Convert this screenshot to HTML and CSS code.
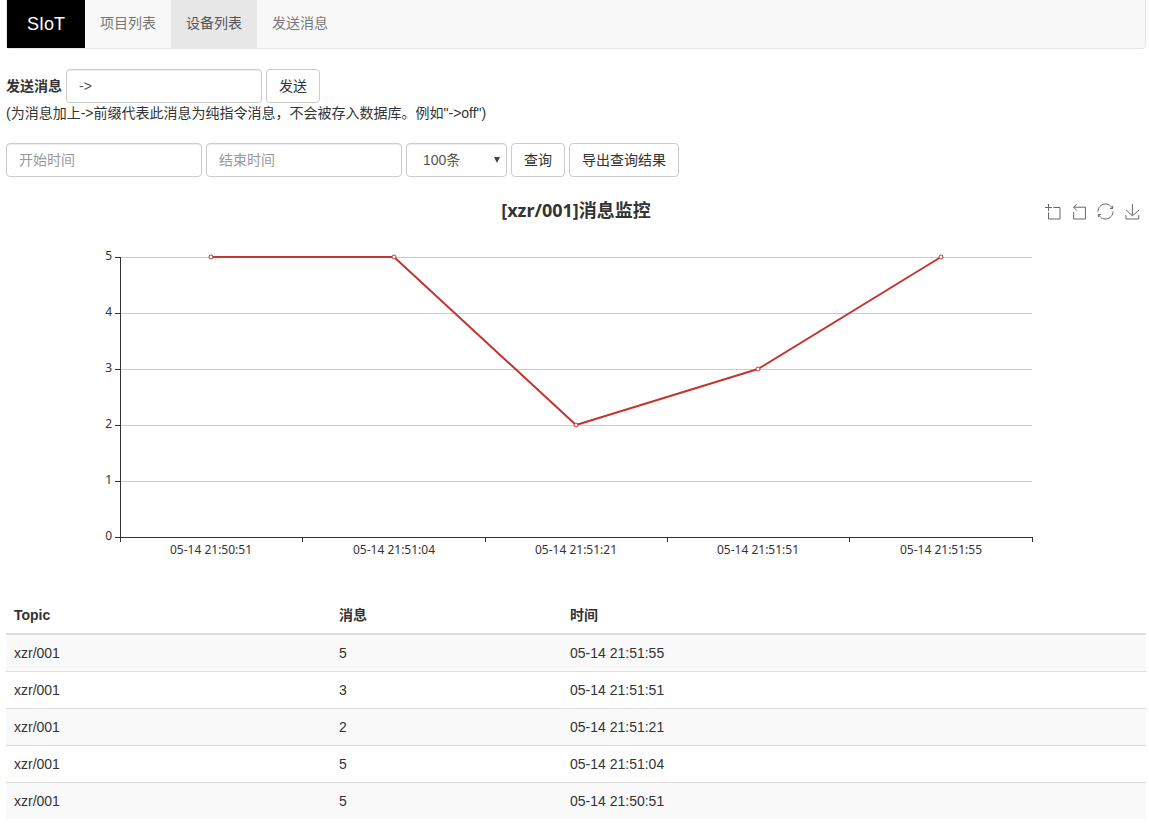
FILE: index.html
```html
<!DOCTYPE html>
<html lang="zh-CN">
<head>
<meta charset="utf-8">
<title>SIoT</title>
<link rel="stylesheet" href="styles.css">
</head>
<body>
<nav class="navbar">
  <a class="brand" href="#">SIoT</a>
  <a class="nav-link" href="#">项目列表</a>
  <a class="nav-link active" href="#">设备列表</a>
  <a class="nav-link" href="#">发送消息</a>
</nav>

<main>
  <form class="send-form">
    <div class="form-row">
      <label class="form-label" for="message">发送消息</label>
      <input class="control" id="message" type="text" value="-&gt;">
      <button class="btn" type="button">发送</button>
    </div>
    <p class="hint">(为消息加上-&gt;前缀代表此消息为纯指令消息，不会被存入数据库。例如"-&gt;off")</p>
  </form>

  <form class="form-row">
    <input class="control" type="text" placeholder="开始时间" aria-label="开始时间">
    <input class="control" type="text" placeholder="结束时间" aria-label="结束时间">
    <div class="select-wrap">
      <select class="control select" aria-label="条数"><option>100条</option></select>
      <svg class="caret" viewBox="0 0 6 6" aria-hidden="true"><path d="M0 0H6L3 6Z"/></svg>
    </div>
    <button class="btn" type="button">查询</button>
    <button class="btn" type="button">导出查询结果</button>
  </form>

  <section class="chart">
    <svg class="plot" viewBox="0 0 1140 400" role="img" aria-label="[xzr/001]消息监控">
      <text class="chart-title" x="570" y="20">[xzr/001]消息监控</text>
      <path class="grid-line" d="M114 60.5H1026M114 116.5H1026M114 172.5H1026M114 228.5H1026M114 284.5H1026"/>
      <path class="axis" d="M114.5 60V345M109 60.5H114M109 116.5H114M109 172.5H114M109 228.5H114M109 284.5H114M109 340.5H1027M296.5 340V345M479.5 340V345M661.5 340V345M843.5 340V345M1026.5 340V345"/>
      <g class="y-labels">
        <text x="106" y="63">5</text>
        <text x="106" y="119">4</text>
        <text x="106" y="175">3</text>
        <text x="106" y="231">2</text>
        <text x="106" y="287">1</text>
        <text x="106" y="343">0</text>
      </g>
      <g class="x-labels">
        <text x="205" y="357">05-14 21:50:51</text>
        <text x="388" y="357">05-14 21:51:04</text>
        <text x="570" y="357">05-14 21:51:21</text>
        <text x="752" y="357">05-14 21:51:51</text>
        <text x="935" y="357">05-14 21:51:55</text>
      </g>
      <polyline class="series" points="205,60 388,60 570,228 752,172 935,60"/>
      <g class="points">
        <circle cx="205" cy="60" r="2"/>
        <circle cx="388" cy="60" r="2"/>
        <circle cx="570" cy="228" r="2"/>
        <circle cx="752" cy="172" r="2"/>
        <circle cx="935" cy="60" r="2"/>
      </g>
    </svg>
    <div class="toolbox">
      <button class="tool" type="button" aria-label="区域缩放"><svg viewBox="0 0 58 58"><path d="M0,13.5h26.9 M13.5,26.9V0 M32.1,13.5H58V58H13.5 V32.1"/></svg></button>
      <button class="tool" type="button" aria-label="区域缩放还原"><svg viewBox="9.9 1.4 45 56.7"><path d="M22,1.4L9.9,13.5l12.3,12.3 M10.3,13.5H54.9v44.6 H10.3v-26"/></svg></button>
      <button class="tool" type="button" aria-label="还原"><svg viewBox="2 2 56 56"><path d="M47,18.9h9.8V8.7 M56.3,20.1 C52.1,9,40.5,0.6,26.8,2.1C12.6,3.7,1.6,16.2,2.1,30.6 M13,41.1H3.1v10.2 M3.7,39.9c4.2,11.1,15.8,19.5,29.5,18 c14.2-1.6,25.2-14.1,24.7-28.5"/></svg></button>
      <button class="tool" type="button" aria-label="保存为图片"><svg viewBox="4.6 0 50.1 58"><path d="M4.7,22.9L29.3,45.5L54.7,23.4M4.6,43.6L4.6,58L53.8,58L53.8,43.6M29.2,45.1L29.2,0"/></svg></button>
    </div>
  </section>

  <table class="messages">
    <thead>
      <tr><th class="col-topic">Topic</th><th class="col-message">消息</th><th>时间</th></tr>
    </thead>
    <tbody>
      <tr><td>xzr/001</td><td>5</td><td>05-14 21:51:55</td></tr>
      <tr><td>xzr/001</td><td>3</td><td>05-14 21:51:51</td></tr>
      <tr><td>xzr/001</td><td>2</td><td>05-14 21:51:21</td></tr>
      <tr><td>xzr/001</td><td>5</td><td>05-14 21:51:04</td></tr>
      <tr><td>xzr/001</td><td>5</td><td>05-14 21:50:51</td></tr>
    </tbody>
  </table>
</main>
</body>
</html>
```

FILE: styles.css
```css
* {
  box-sizing: border-box;
}

body {
  margin: 0;
  padding: 0 3px 0 6px;
  background: #fff;
  color: #333;
  font: 14px/20px "Liberation Sans", "Noto Sans CJK SC", sans-serif;
}

.navbar {
  display: flex;
  margin-bottom: 20px;
  background: #f8f8f8;
  border: 1px solid #e7e7e7;
  border-top: 0;
  border-radius: 0 0 4px 4px;
}

.brand {
  padding: 14px 20px;
  background: #000;
  color: #fff;
  font-size: 18px;
  text-decoration: none;
}

.nav-link {
  padding: 13px 15px 15px;
  color: #777;
  text-decoration: none;
}

.nav-link.active {
  background: #e7e7e7;
  color: #555;
}

.send-form {
  margin-bottom: 20px;
}

.form-row {
  display: flex;
  flex-wrap: wrap;
  align-items: center;
  gap: 4px;
}

.form-label {
  font-weight: bold;
}

.hint {
  margin: 0;
}

.control {
  width: 196px;
  height: 34px;
  padding: 6px 12px;
  border: 1px solid #ccc;
  border-radius: 4px;
  background: #fff;
  box-shadow: inset 0 1px 1px rgba(0, 0, 0, 0.075);
  color: #555;
  font: inherit;
}

.control::placeholder {
  color: #999;
}

.btn {
  height: 34px;
  padding: 6px 12px;
  border: 1px solid #ccc;
  border-radius: 4px;
  background: #fff;
  color: #333;
  font: inherit;
}

.select-wrap {
  display: grid;
  align-items: center;
}

.select {
  grid-area: 1 / 1;
  width: 101px;
  padding: 6px 16px;
  appearance: none;
}

.caret {
  grid-area: 1 / 1;
  justify-self: end;
  width: 6px;
  height: 6px;
  margin-right: 7px;
  fill: #444;
  pointer-events: none;
}

.chart {
  position: relative;
  margin-top: 20px;
}

.plot {
  display: block;
  width: 100%;
  font: 12px "Noto Sans", "Noto Sans CJK SC", sans-serif;
  fill: #333;
}

.chart-title {
  font-size: 18px;
  font-weight: bold;
  text-anchor: middle;
}

.grid-line {
  stroke: #ccc;
}

.axis {
  fill: none;
  stroke: #333;
}

.y-labels {
  text-anchor: end;
}

.x-labels {
  text-anchor: middle;
}

.series {
  fill: none;
  stroke: #c23531;
  stroke-width: 2;
  stroke-linejoin: bevel;
}

.points {
  fill: #fff;
  stroke: #c23531;
}

.toolbox {
  position: absolute;
  top: 7px;
  right: 6px;
  display: flex;
  justify-content: space-between;
  width: 95px;
}

.tool {
  width: 15px;
  height: 15px;
  padding: 0;
  border: 0;
  background: none;
}

.tool svg {
  display: block;
  width: 15px;
  height: 15px;
  overflow: visible;
  fill: none;
  stroke: #666;
}

.tool path {
  vector-effect: non-scaling-stroke;
}

.messages {
  width: 100%;
  border-collapse: collapse;
}

.messages th,
.messages td {
  padding: 8px;
  text-align: left;
}

.messages th {
  border-bottom: 2px solid #ddd;
}

.messages td {
  border-top: 1px solid #ddd;
}

.messages tbody tr:nth-child(odd) {
  background: #f9f9f9;
}

.col-topic {
  width: 325px;
}

.col-message {
  width: 231px;
}
```
